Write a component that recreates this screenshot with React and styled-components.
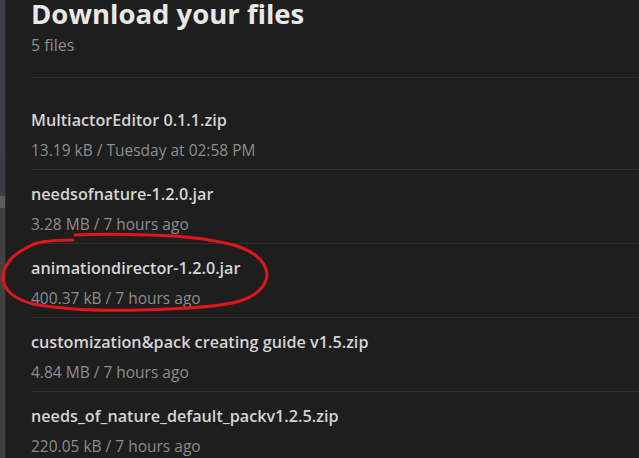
import styled, { createGlobalStyle } from "styled-components";

const files = [
  { name: "MultiactorEditor 0.1.1.zip", meta: "13.19 kB / Tuesday at 02:58 PM" },
  { name: "needsofnature-1.2.0.jar", meta: "3.28 MB / 7 hours ago" },
  { name: "animationdirector-1.2.0.jar", meta: "400.37 kB / 7 hours ago" },
  { name: "customization&pack creating guide v1.5.zip", meta: "4.84 MB / 7 hours ago" },
  { name: "needs_of_nature_default_packv1.2.5.zip", meta: "220.05 kB / 7 hours ago" },
];

const App = () => {
  return (
    <Page>
      <Global />
      <Strip />
      <Panel>
        <Header>
          <Title>Download your files</Title>
          <Count>5 files</Count>
        </Header>
        <List>
          {files.map((f) => (
            <Row key={f.name}>
              <Name>{f.name}</Name>
              <Meta>{f.meta}</Meta>
            </Row>
          ))}
        </List>
      </Panel>
      <Scribble viewBox="0 0 639 458" width="639" height="458">
        <path
          d="M73 240 C55 240 38 241 30 246 C12 254 3 266 3 278 C4 290 14 299 33 304 C60 309 100 311 140 310 C185 309 220 307 240 301 C258 295 267 285 267 274 C266 263 258 254 240 247 C215 239 185 236 150 235 C120 234 95 234 75 235"
          fill="none"
          stroke="#e3151a"
          strokeWidth="3"
          strokeLinecap="round"
        />
      </Scribble>
    </Page>
  );
};

export default App;

const Global = createGlobalStyle`
  html, body {
    margin: 0;
    padding: 0;
    background: #1e1e1e;
    overflow: hidden;
  }
  body {
    font-family: "Open Sans", "Noto Sans", sans-serif;
  }
`;

const Page = styled.div`
  position: relative;
  display: flex;
  width: 639px;
  height: 458px;
  overflow: hidden;
  background: #1e1e1e;
`;

const Strip = styled.div`
  flex: 0 0 5px;
  background: linear-gradient(
    to bottom,
    #3d4049 0,
    #3a3c43 196px,
    #5c5c5c 196px,
    #5c5c5c 208px,
    #414141 208px,
    #414141 100%
  );
  border-right: 1px solid #2a2a2a;
`;

const Panel = styled.div`
  flex: 1;
  padding-left: 25px;
`;

const Header = styled.div`
  padding-bottom: 21px;
  border-bottom: 1px solid #2f2f2f;
`;

const Title = styled.h1`
  margin: 0 0 6px;
  font-size: 27.5px;
  line-height: 28px;
  font-weight: 700;
  color: #e8e8e8;
  white-space: nowrap;
`;

const Count = styled.div`
  font-size: 16px;
  line-height: 22px;
  color: #8e8e8e;
`;

const List = styled.div`
  padding-top: 18px;
`;

const Row = styled.div`
  padding: 13px 0 8px;
  border-bottom: 1px solid #2f2f2f;
`;

const Name = styled.div`
  font-size: 16.2px;
  line-height: 22px;
  font-weight: 600;
  color: #d4d4d4;
  margin-bottom: 8px;
  white-space: nowrap;
`;

const Meta = styled.div`
  font-size: 15.5px;
  line-height: 22px;
  color: #8c8c8c;
  white-space: nowrap;
`;

const Scribble = styled.svg`
  position: absolute;
  left: 0;
  top: 0;
  pointer-events: none;
`;
